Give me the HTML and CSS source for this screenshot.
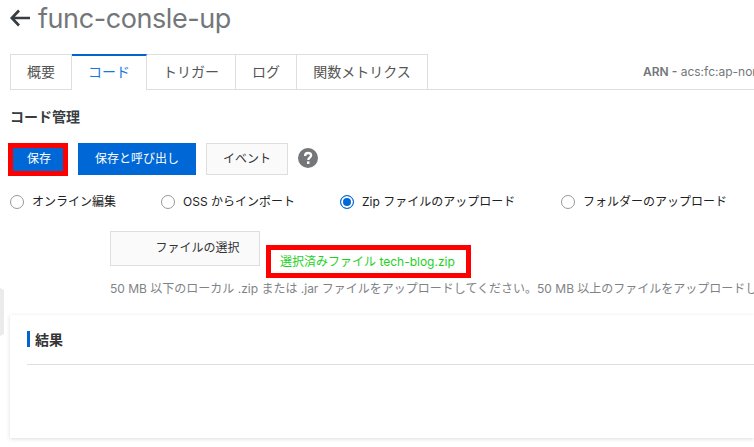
FILE: index.html
```html
<!DOCTYPE html>
<html lang="ja">
<head>
<meta charset="utf-8">
<title>func-consle-up</title>
<link rel="stylesheet" href="styles.css">
</head>
<body>
<header class="title">
  <svg class="back" width="20" height="18" viewBox="0 0 20 18" fill="none" stroke="#373d41" stroke-width="2.7"><path d="M20 9H2M9 1.5L1.8 9L9 16.5"/></svg>
  <h1>func-consle-up</h1>
</header>
<nav class="tabs">
  <a class="tab t1">概要</a>
  <a class="tab t2 active">コード</a>
  <a class="tab t3">トリガー</a>
  <a class="tab t4">ログ</a>
  <a class="tab t5">関数メトリクス</a>
  <div class="arn"><b>ARN -</b> acs:fc:ap-nor</div>
</nav>
<h2>コード管理</h2>
<div class="actions">
  <button class="btn primary save">保存</button>
  <button class="btn primary invoke">保存と呼び出し</button>
  <button class="btn event">イベント</button>
  <svg class="help" width="20" height="20" viewBox="0 0 20 20"><circle cx="10" cy="10" r="10" fill="#73777a"/><path d="M7.1 7.9C7.1 6.1 8.2 5 10.1 5c1.8 0 3 1 3 2.5 0 2.1-2.8 2.2-2.8 4.4" fill="none" stroke="#fff" stroke-width="2.3"/><rect x="9" y="13.4" width="2.5" height="2.5" fill="#fff"/></svg>
</div>
<div class="radios">
  <label class="radio r1"><i></i><span>オンライン編集</span></label>
  <label class="radio r2"><i></i><span>OSS からインポート</span></label>
  <label class="radio r3 checked"><i></i><span>Zip ファイルのアップロード</span></label>
  <label class="radio r4"><i></i><span>フォルダーのアップロード</span></label>
</div>
<div class="upload">
  <button class="btn choose">ファイルの選択</button>
  <div class="selected"><span>選択済みファイル tech-blog.zip</span></div>
</div>
<p class="hint"><span>50 MB 以下のローカル .zip または .jar ファイルをアップロードしてください。50 MB 以上のファイルをアップロードし</span></p>
<svg class="handle" width="4" height="48" viewBox="0 0 4 48"><path d="M0 0L4 2V46L0 48Z" fill="#ebebeb"/></svg>
<section class="result">
  <h3><span>結果</span></h3>
</section>
</body>
</html>
```
FILE: styles.css
```css
* { box-sizing: border-box; }
html, body { height: 447px; overflow: hidden; }
body {
  margin: 0;
  position: relative;
  background: #fff;
  color: #333;
  font: 12px/18px Inter, "Noto Sans CJK JP", sans-serif;
  white-space: nowrap;
}
h1, h2, h3, p { margin: 0; }
.title { display: flex; height: 54px; padding-left: 10px; }
.back { margin-top: 9px; flex: none; }
h1 { margin-left: 8px; font-size: 27px; line-height: 38px; font-weight: 400; letter-spacing: -.42px; color: #73777a; }
.tabs { display: flex; height: 36px; padding-left: 10px; }
.tab {
  flex: none;
  height: 36px;
  border: 1px solid #dedede;
  border-left: 0;
  font-size: 14px;
  line-height: 34px;
  text-align: center;
  color: #555;
}
.t1 { width: 62px; border-left: 1px solid #dedede; }
.t2 { width: 75px; }
.t3 { width: 89px; }
.t4 { width: 61px; }
.t5 { width: 131px; }
.tab.active { border-top: 2px solid #0064d2; border-bottom: 0; line-height: 32px; color: #1478e0; }
.arn { flex: 1; min-width: 0; padding-left: 215px; border-bottom: 1px solid #dedede; line-height: 36px; color: #73777a; }
.arn b { font-weight: 600; }
h2 { height: 53px; padding: 18px 0 0 10px; font-size: 14px; line-height: 18px; font-weight: 600; color: #373d41; }
.actions { display: flex; padding-left: 8px; height: 47px; }
.btn { display: block; flex: none; padding: 0; font: inherit; text-align: center; border: 1px solid #dedede; background: #fafafa; color: #333; }
.primary { height: 32px; border: 0; background: #0068d6; color: #fff; }
.save { width: 60px; height: 33px; border: 5px solid #f00; padding: 0 0 2px 2px; }
.invoke { width: 118px; margin-left: 10px; }
.event { width: 82px; height: 32px; margin-left: 10px; }
.help { margin: 5px 0 0 10px; flex: none; }
.radios { display: flex; height: 41px; padding-left: 10px; line-height: 24px; color: #222; }
.radio { display: flex; flex: none; }
.radio i { width: 14px; height: 14px; margin: 5px 8px 0 0; border: 1px solid #999; border-radius: 50%; flex: none; }
.r1 { width: 151px; }
.r2 { width: 179px; }
.r3 { width: 221px; }
.checked i { border-color: #0068d6; background: #0068d6; box-shadow: inset 0 0 0 2px #fff; }
.upload { display: flex; height: 48px; padding-left: 110px; }
.choose { width: 150px; height: 35px; padding: 0 0 2px 25px; }
.selected { width: 205px; height: 33px; margin: 14px 0 0 6px; border: 5px solid #f00; padding-left: 9px; line-height: 23px; color: #1dd11d; }
.hint { height: 36px; padding: 1px 0 0 110px; line-height: 18px; color: #808386; }
.handle { position: absolute; left: 0; top: 288px; }
.result { height: 123px; margin: 0 0 0 10px; padding: 16px 0 0 17px; background: #fff; box-shadow: 0 1px 4px rgba(0, 0, 0, .14); }
h3 { height: 34px; border-bottom: 1px solid #dedede; font-size: 14px; line-height: 18px; font-weight: 700; color: #333; }
h3 span { display: block; padding-left: 5px; border-left: 3px solid #0064d2; height: 16px; line-height: 17px; }
```
